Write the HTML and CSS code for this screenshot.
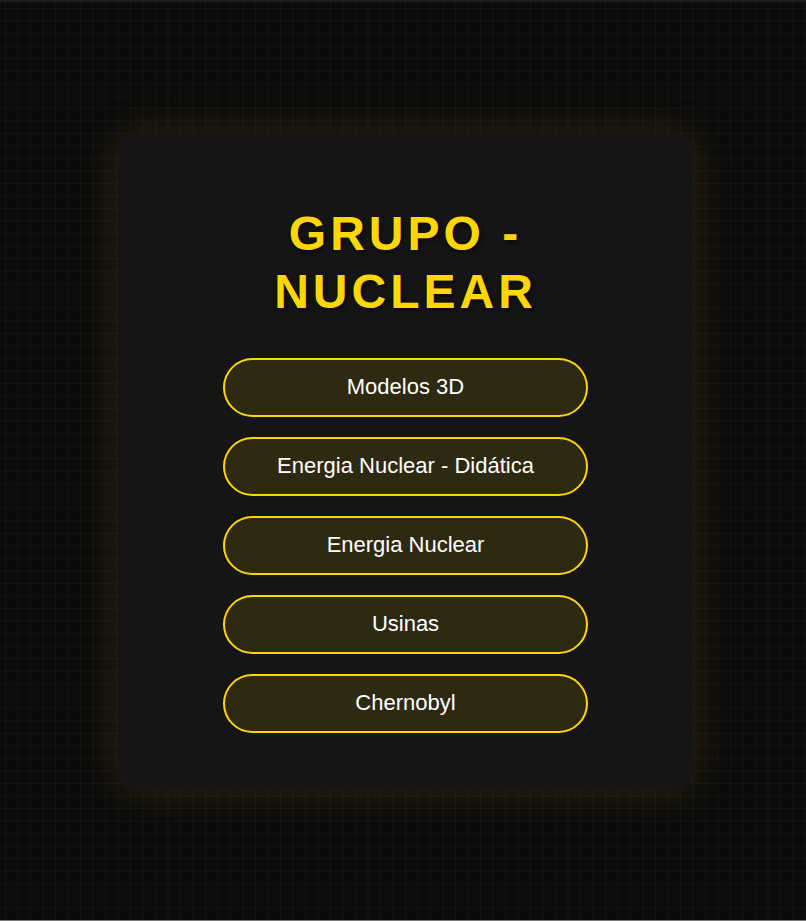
FILE: index.html
```html
<!DOCTYPE html>
<html lang="pt">
<head>
<meta charset="utf-8">
<title>Grupo - Nuclear</title>
<link rel="stylesheet" href="styles.css">
</head>
<body>
<main class="page">
  <section class="card">
    <h1 class="title">GRUPO - NUCLEAR</h1>
    <nav class="menu">
      <a class="btn" href="#">Modelos 3D</a>
      <a class="btn" href="#">Energia Nuclear - Didática</a>
      <a class="btn" href="#">Energia Nuclear</a>
      <a class="btn" href="#">Usinas</a>
      <a class="btn" href="#">Chernobyl</a>
    </nav>
  </section>
</main>
</body>
</html>
```
FILE: styles.css
```css
html, body {
  margin: 0;
  padding: 0;
  height: 100%;
}
body {
  background-color: #0b0b0b;
  background-image:
    linear-gradient(to right, rgba(255,255,255,0.035) 1px, transparent 1px),
    linear-gradient(to bottom, rgba(255,255,255,0.035) 1px, transparent 1px);
  background-size: 12.5px 12.5px;
  background-position: 5px 8px;
  font-family: "Liberation Sans", Arial, sans-serif;
  border-top: 2px solid #1d1d21;
  border-bottom: 1px solid #7a7a7a;
  box-sizing: border-box;
}
.page {
  height: 100%;
  display: flex;
  align-items: center;
  justify-content: center;
  padding-left: 5px;
  box-sizing: border-box;
}
.card {
  width: 575px;
  height: 657px;
  box-sizing: border-box;
  background: #151515;
  border-radius: 16px;
  padding: 40px 40px;
  box-shadow: 0 0 40px rgba(255, 215, 0, 0.14);
  display: flex;
  flex-direction: column;
  align-items: center;
}
.title {
  margin: 32px 0 37px;
  color: #ffd700;
  font-size: 48px;
  line-height: 58px;
  font-weight: bold;
  letter-spacing: 4px;
  text-align: center;
  max-width: 440px;
  text-shadow: 2px 2px 4px rgba(0, 0, 0, 0.6);
}
.menu {
  display: flex;
  flex-direction: column;
  gap: 20px;
}
.btn {
  width: 365px;
  height: 59px;
  box-sizing: border-box;
  border: 2px solid #ffd700;
  border-radius: 30px;
  background: rgba(255, 215, 0, 0.11);
  color: #ffffff;
  text-decoration: none;
  font-size: 22px;
  display: flex;
  align-items: center;
  justify-content: center;
}
```
